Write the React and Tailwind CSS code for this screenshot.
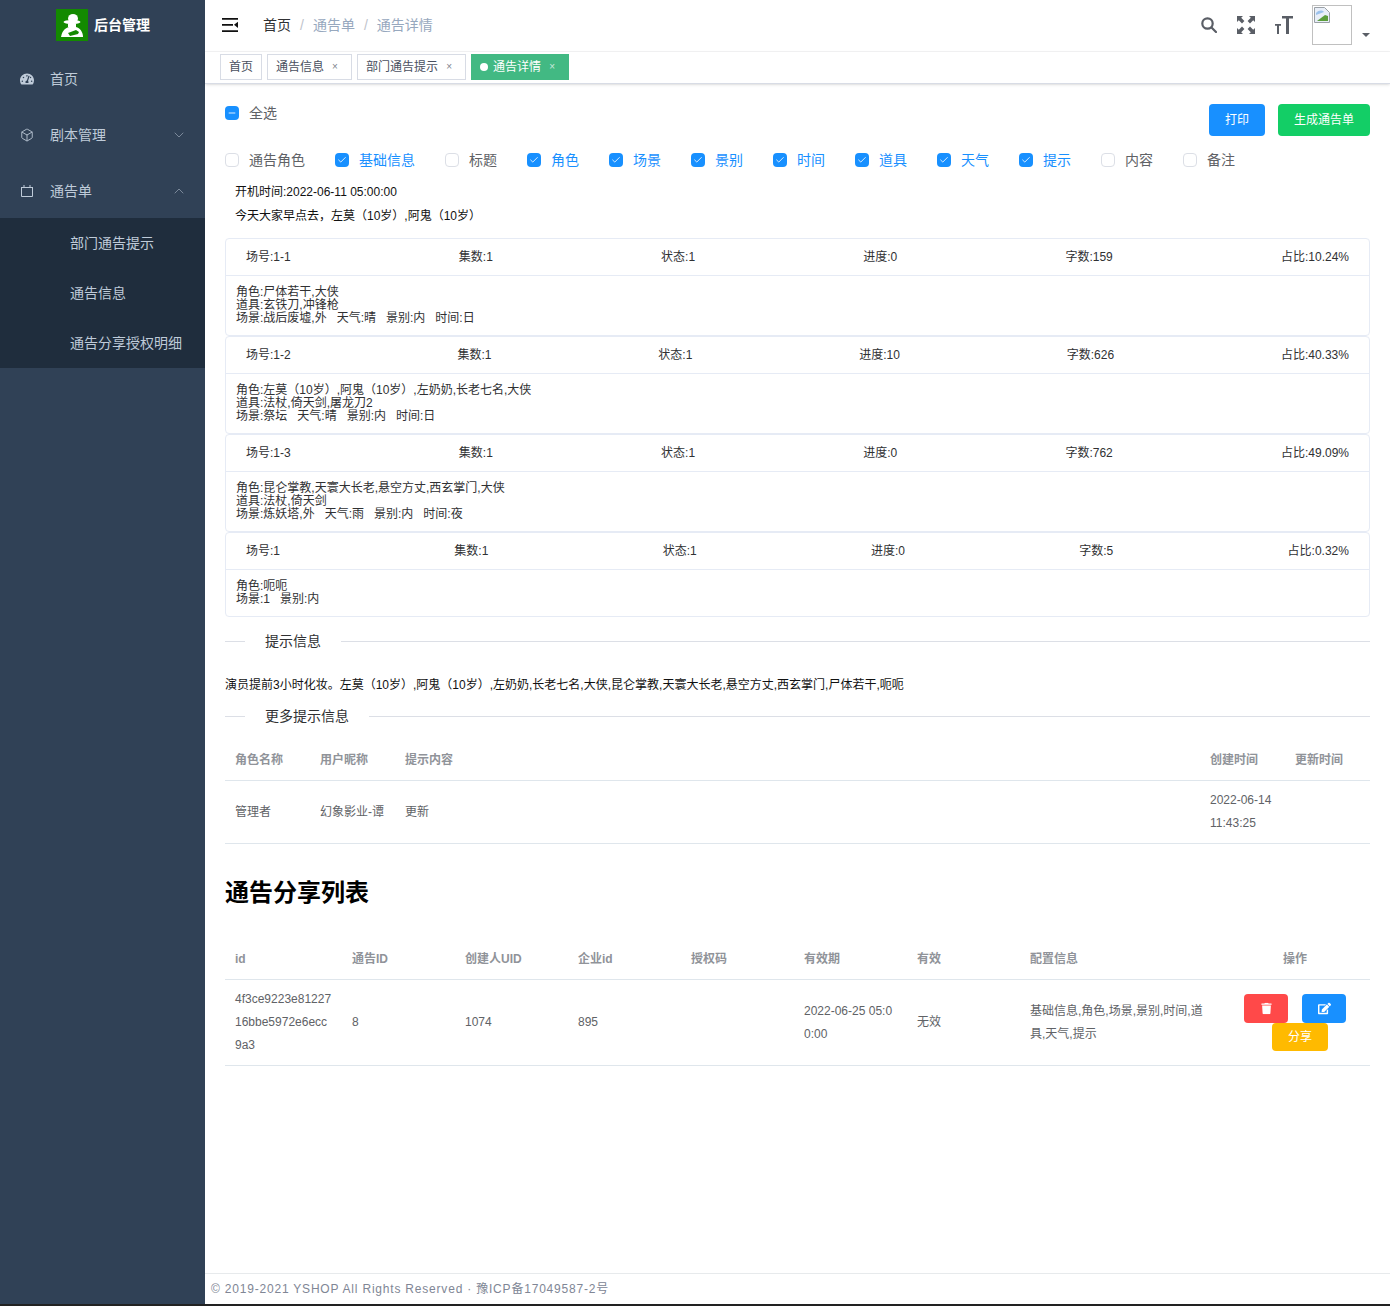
import React from "react";
import { Box, ChevronDown, ChevronUp, Check, Minus } from "lucide-react";
import { FaTachometerAlt, FaTrash, FaEdit } from "react-icons/fa";

const cards = [
  { h: ["场号:1-1", "集数:1", "状态:1", "进度:0", "字数:159", "占比:10.24%"], b: ["角色:尸体若干,大侠", "道具:玄铁刀,冲锋枪", "场景:战后废墟,外\u00a0\u00a0\u00a0天气:晴\u00a0\u00a0\u00a0景别:内\u00a0\u00a0\u00a0时间:日"] },
  { h: ["场号:1-2", "集数:1", "状态:1", "进度:10", "字数:626", "占比:40.33%"], b: ["角色:左莫（10岁）,阿鬼（10岁）,左奶奶,长老七名,大侠", "道具:法杖,倚天剑,屠龙刀2", "场景:祭坛\u00a0\u00a0\u00a0天气:晴\u00a0\u00a0\u00a0景别:内\u00a0\u00a0\u00a0时间:日"] },
  { h: ["场号:1-3", "集数:1", "状态:1", "进度:0", "字数:762", "占比:49.09%"], b: ["角色:昆仑掌教,天寰大长老,悬空方丈,西玄掌门,大侠", "道具:法杖,倚天剑", "场景:炼妖塔,外\u00a0\u00a0\u00a0天气:雨\u00a0\u00a0\u00a0景别:内\u00a0\u00a0\u00a0时间:夜"] },
  { h: ["场号:1", "集数:1", "状态:1", "进度:0", "字数:5", "占比:0.32%"], b: ["角色:呃呃", "场景:1\u00a0\u00a0\u00a0景别:内"] },
];

const checks = [
  ["通告角色", false], ["基础信息", true], ["标题", false], ["角色", true], ["场景", true], ["景别", true],
  ["时间", true], ["道具", true], ["天气", true], ["提示", true], ["内容", false], ["备注", false],
];

function CheckItem({ label, on }) {
  return (
    <div className="flex items-center gap-2.5 mr-7.5">
      {on ? (
        <span className="flex items-center justify-center w-3.5 h-3.5 rounded-sm bg-[#1890ff]">
          <Check size={10} strokeWidth={2} className="text-white" />
        </span>
      ) : (
        <span className="w-3.5 h-3.5 rounded-sm border border-[#dcdfe6] bg-white" />
      )}
      <span className={on ? "text-sm text-[#1890ff]" : "text-sm text-[#606266]"}>{label}</span>
    </div>
  );
}

function Divider({ children }) {
  return (
    <div className="flex items-center h-px">
      <div className="w-5 h-px bg-[#dcdfe6]" />
      <span className="px-5 pb-0.5 text-sm text-[#303133]">{children}</span>
      <div className="flex-1 h-px bg-[#dcdfe6]" />
    </div>
  );
}

function MenuItem({ icon, label, chevron }) {
  return (
    <div className="flex items-center h-14 pt-0.5 pl-5 pr-4.5 text-sm text-[#bfcbd9]">
      <span className="flex items-center justify-center w-3.5 mr-4">{icon}</span>
      <span className="flex-1">{label}</span>
      {chevron}
    </div>
  );
}

function Tag({ label, active, close = true }) {
  return (
    <div className={active
      ? "flex items-center h-6.5 px-2 text-xs bg-[#42b983] border border-[#42b983] text-white"
      : "flex items-center h-6.5 px-2 text-xs bg-white border border-[#d8dce5] text-[#495060]"}>
      {active && <span className="w-2 h-2 rounded-full bg-white mr-1.25" />}
      <span>{label}</span>
      {close && <span className="ml-0.75 w-4 text-center text-[10px] opacity-70">×</span>}
    </div>
  );
}

export default function App() {
  const th = "px-2.5 pt-0.5 flex items-center font-bold";
  return (
    <div className="font-['Liberation_Sans','Noto_Sans_CJK_SC',sans-serif]">
      <div className="flex h-[1304px] bg-white">
        <aside className="w-[205px] shrink-0 bg-[#304156]">
          <div className="flex items-center h-12.5 pl-14">
            <span className="flex items-center justify-center w-8 h-8 bg-[#138a00]">
              <svg viewBox="0 0 32 32" className="w-8 h-8">
                <ellipse cx="17" cy="9.5" rx="5" ry="4.5" fill="#fff" />
                <ellipse cx="16" cy="13" rx="8.5" ry="2" fill="#fff" />
                <path d="M12 15h8v3h-8z" fill="#fff" />
                <path d="M5 28 C6 22 9 19 13 18 L20 18 C24 19 27 23 27 28 Z" fill="#fff" />
                <path d="M12 24 L20 21 L23 23 L22 25 L14 27 Z" fill="#138a00" />
              </svg>
            </span>
            <span className="ml-1.5 text-sm font-bold text-white">后台管理</span>
          </div>
          <MenuItem icon={<FaTachometerAlt size={14} />} label="首页" />
          <MenuItem icon={<Box size={16} strokeWidth={1.5} />} label="剧本管理" chevron={<ChevronDown size={16} strokeWidth={1.25} className="text-[#8a97a8]" />} />
          <MenuItem
            icon={
              <svg viewBox="0 0 14 14" className="w-3.5 h-3.5" fill="none" stroke="currentColor" strokeWidth="1">
                <path d="M1 3.5h12M1.5 3.5v9h11v-9M4 1v2.5M10 1v2.5" />
              </svg>
            }
            label="通告单"
            chevron={<ChevronUp size={16} strokeWidth={1.25} className="text-[#8a97a8]" />}
          />
          <div className="bg-[#1f2d3d] text-sm text-[#bfcbd9]">
            {["部门通告提示", "通告信息", "通告分享授权明细"].map((t) => (
              <div key={t} className="flex items-center h-12.5 pl-17.5">{t}</div>
            ))}
          </div>
        </aside>

        <main className="flex-1 min-w-0 flex flex-col">
          <header className="flex items-center h-13 shrink-0 pl-4.25 pr-5 pb-0.5 border-b border-[#f4f4f5]">
            <svg viewBox="0 0 16 14" className="w-4 h-3.5 text-[#111]" fill="currentColor">
              <path d="M0 0h16v1.7H0zM0 6h11v1.7H0zM0 12.3h16V14H0z" />
              <path d="M16 3.8v6.1L12 6.85z" />
            </svg>
            <nav className="flex items-center ml-6.25 text-sm">
              <span className="text-[#303133]">首页</span>
              <span className="mx-2.25 text-[#c0c4cc]">/</span>
              <span className="text-[#97a8be]">通告单</span>
              <span className="mx-2.25 text-[#c0c4cc]">/</span>
              <span className="text-[#97a8be]">通告详情</span>
            </nav>
            <div className="ml-auto flex items-center text-[#5a5e66]">
              <svg viewBox="0 0 16 16" className="w-4 h-4" fill="none" stroke="currentColor" strokeWidth="2.2" strokeLinecap="round">
                <circle cx="6.5" cy="6.5" r="5.2" />
                <path d="M10.5 10.5L15 15" />
              </svg>
              <svg viewBox="0 0 18 18" className="w-4.5 h-4.5 ml-5" fill="currentColor">
                <path d="M0 0h6L4.2 1.8 7.4 5 5 7.4 1.8 4.2 0 6zM18 0v6l-1.8-1.8L13 7.4 10.6 5l3.2-3.2L12 0zM0 18v-6l1.8 1.8L5 10.6 7.4 13l-3.2 3.2L6 18zM18 18h-6l1.8-1.8-3.2-3.2 2.4-2.4 3.2 3.2L18 12z" />
              </svg>
              <svg viewBox="0 0 18 18" className="w-4.5 h-4.5 ml-5" fill="currentColor">
                <path d="M7 0h11v2.6h-4V18h-3V2.6H7zM0 8h6v1.8H4V18H2V9.8H0z" />
              </svg>
              <div className="ml-4.75 w-10 h-10 p-px border border-[#c0c0c0] bg-white">
                <svg viewBox="0 0 16 16" className="w-4 h-4">
                  <path d="M0.5 0.5h10l5 5v10h-15z" fill="#e8eef8" stroke="#9aa0a6" />
                  <path d="M2 6c3-3 6-3 8-1l-8 3z" fill="#9cc2ec" />
                  <path d="M3 14l8-6 3 1v5z" fill="#5c9e3c" />
                </svg>
              </div>
              <span className="ml-2.5 mt-5 w-0 h-0 border-x-4 border-t-4 border-x-transparent border-t-[#5a5e66]" />
            </div>
          </header>

          <div className="flex items-start gap-1.25 h-8 pt-0.5 pl-3.75 shrink-0 border-b border-[#d8dce5] shadow">
            <Tag label="首页" close={false} />
            <Tag label="通告信息" />
            <Tag label="部门通告提示" />
            <Tag label="通告详情" active />
          </div>

          <div className="flex-1 px-5 pt-5">
            <div className="flex items-start h-8">
              <div className="flex items-center gap-2.5 mt-0.5">
                <span className="flex items-center justify-center w-3.5 h-3.5 rounded-sm bg-[#1890ff]">
                  <Minus size={10} strokeWidth={2} className="text-white" />
                </span>
                <span className="text-sm leading-none text-[#606266]">全选</span>
              </div>
              <button className="ml-auto h-8 w-14 rounded bg-[#1890ff] text-xs text-white">打印</button>
              <button className="ml-3.25 h-8 w-23 rounded bg-[#13ce66] text-xs text-white">生成通告单</button>
            </div>

            <div className="flex items-center h-5 mt-3.5">
              {checks.map(([l, on]) => <CheckItem key={l} label={l} on={on} />)}
            </div>

            <div className="mt-2.5 mb-2.5 px-2.5 text-xs leading-6 text-[#111]">
              <div>开机时间:2022-06-11 05:00:00</div>
              <div>今天大家早点去，左莫（10岁）,阿鬼（10岁）</div>
            </div>

            <div>
              {cards.map((c, i) => (
                <div key={i} className="border border-[#e6ebf5] rounded text-xs text-[#303133]">
                  <div className="flex justify-between items-center h-9.25 px-5 border-b border-[#e6ebf5]">
                    {c.h.map((t) => <span key={t}>{t}</span>)}
                  </div>
                  <div className="p-2.5 leading-[13px]">
                    {c.b.map((t) => <div key={t}>{t}</div>)}
                  </div>
                </div>
              ))}
            </div>

            <div className="mt-6"><Divider>提示信息</Divider></div>
            <div className="mt-8.25 text-xs leading-5 text-[#111]">
              演员提前3小时化妆。左莫（10岁）,阿鬼（10岁）,左奶奶,长老七名,大侠,昆仑掌教,天寰大长老,悬空方丈,西玄掌门,尸体若干,呃呃
            </div>
            <div className="mt-5.25"><Divider>更多提示信息</Divider></div>

            <div className="mt-5 text-xs">
              <div className="grid grid-cols-[85px_85px_1fr_85px_85px] h-11 border-b border-[#dfe6ec] text-[#909399]">
                {["角色名称", "用户昵称", "提示内容", "创建时间", "更新时间"].map((t) => (
                  <div key={t} className={th}>{t}</div>
                ))}
              </div>
              <div className="grid grid-cols-[85px_85px_1fr_85px_85px] border-b border-[#dfe6ec] text-[#606266] leading-5.75 py-2">
                <div className="px-2.5 flex items-center">管理者</div>
                <div className="px-2.5 flex items-center">幻象影业-谭</div>
                <div className="px-2.5 flex items-center">更新</div>
                <div className="px-2.5">2022-06-14 11:43:25</div>
                <div className="px-2.5" />
              </div>
            </div>

            <h2 className="mt-8.25 text-2xl leading-8 font-bold text-black">通告分享列表</h2>

            <div className="mt-6.75 text-xs">
              <div className="grid grid-cols-[117px_repeat(6,113px)_200px_150px] h-11 border-b border-[#dfe6ec] text-[#909399]">
                {["id", "通告ID", "创建人UID", "企业id", "授权码", "有效期", "有效", "配置信息"].map((t) => (
                  <div key={t} className={th}>{t}</div>
                ))}
                <div className={th + " justify-center"}>操作</div>
              </div>
              <div className="grid grid-cols-[117px_repeat(6,113px)_200px_150px] border-b border-[#dfe6ec] text-[#606266] leading-5.75 py-2 items-center">
                <div className="px-2.5 break-all">4f3ce9223e8122716bbe5972e6ecc9a3</div>
                <div className="px-2.5">8</div>
                <div className="px-2.5">1074</div>
                <div className="px-2.5">895</div>
                <div className="px-2.5" />
                <div className="px-2.5 break-all">2022-06-25 05:00:00</div>
                <div className="px-2.5">无效</div>
                <div className="px-2.5">基础信息,角色,场景,景别,时间,道具,天气,提示</div>
                <div className="px-2.5 flex flex-wrap justify-center gap-x-3.5">
                  <button className="flex justify-center w-11 py-2 rounded bg-[#ff4949] text-white"><FaTrash size={13} className="scale-90" /></button>
                  <button className="flex justify-center w-11 py-2 rounded bg-[#1890ff] text-white"><FaEdit size={13} /></button>
                  <button className="ml-2.5 w-14 h-7 leading-none rounded bg-[#ffba00] text-white">分享</button>
                </div>
              </div>
            </div>
          </div>

          <footer className="flex items-center h-7.75 shrink-0 pl-1.5 border-t border-[#e7eaec] text-xs tracking-[0.8px] text-[#808695]">
            © 2019-2021 YSHOP All Rights Reserved · 豫ICP备17049587-2号
          </footer>
        </main>
      </div>
      <div className="h-0.5 bg-[#222]" />
    </div>
  );
}
